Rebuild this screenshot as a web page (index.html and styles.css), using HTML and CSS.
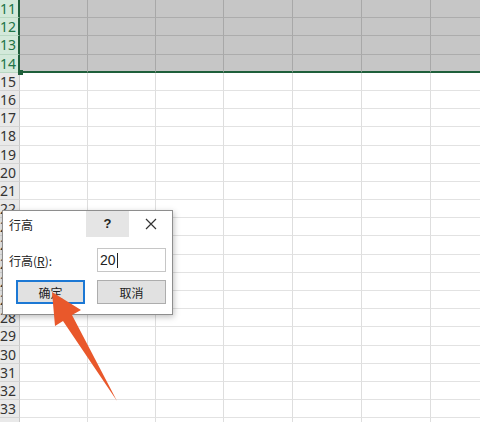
FILE: index.html
```html
<!DOCTYPE html>
<html>
<head>
    <title>行高</title>
    <link rel="stylesheet" href="styles.css">
</head>
<body>
    <div id="sheet" class="sheet"></div>

    <div class="fill-handle"></div>

    <div class="dialog">
        <div class="dlg-title">
            <span class="dlg-caption">行高</span>
            <span class="dlg-help">?</span>
            <span class="dlg-close">
                <svg width="12" height="12" viewBox="0 0 12 12"><path d="M1 1 L11 11 M11 1 L1 11" stroke="#333" stroke-width="1.2" fill="none"/></svg>
            </span>
        </div>
        <div class="dlg-body">
            <div class="dlg-row">
                <span class="dlg-label">行高(<u>R</u>):</span>
                <div class="dlg-input">20<span class="caret"></span></div>
            </div>
            <div class="dlg-buttons">
                <button class="btn btn-default">确定</button>
                <button class="btn">取消</button>
            </div>
        </div>
    </div>

    <svg class="arrow" width="480" height="422" viewBox="0 0 480 422">
        <polygon points="52,292 81,310 72,315 117,401 63,321 55,326" fill="#e9582b"/>
    </svg>

    <script>
        const sheet = document.getElementById("sheet");
        const cols = 7;
        for (let r = 11; r <= 34; r++) {
            const selected = r >= 11 && r <= 14;
            const head = document.createElement("div");
            head.className = "row-head" + (selected ? " sel" : "");
            head.textContent = r;
            sheet.appendChild(head);
            for (let c = 0; c < cols; c++) {
                const cell = document.createElement("div");
                cell.className = "cell" + (selected ? " sel" : "") + (r === 14 ? " sel-last" : "");
                sheet.appendChild(cell);
            }
        }
    </script>
</body>
</html>
```

FILE: styles.css
```css
body {
    margin: 0;
    width: 480px;
    height: 422px;
    overflow: hidden;
    background-color: #fff;
    font-family: "Noto Sans", "Noto Sans CJK SC", sans-serif;
    position: relative;
}

.sheet {
    display: grid;
    grid-template-columns: 20px 68px 68px 68px 69px 69px 69px 69px;
    grid-auto-rows: 18.2px;
}

.row-head {
    box-sizing: border-box;
    background-color: #e9e9e9;
    border-right: 1px solid #c8c8c8;
    border-bottom: 1px solid #d4d4d4;
    color: #333;
    font-size: 14px;
    line-height: 18px;
    text-align: right;
    padding-right: 7px;
    overflow: hidden;
    white-space: nowrap;
}

.row-head.sel {
    background-color: #d3e9da;
    color: #217346;
    border-right: 2px solid #1f5f3b;
    border-bottom-color: #b9d8c3;
}

.cell {
    box-sizing: border-box;
    border-right: 1px solid #dedede;
    border-bottom: 1px solid #e2e2e2;
}

.cell.sel {
    background-color: #c6c6c6;
    border-right-color: #a8a8a8;
    border-bottom-color: #acacac;
}

.cell.sel-last {
    border-bottom: 2px solid #1f5f3b;
}

.fill-handle {
    position: absolute;
    left: 18px;
    top: 70px;
    width: 5px;
    height: 5px;
    background-color: #1f5f3b;
}

.dialog {
    position: absolute;
    left: 2px;
    top: 210px;
    width: 171px;
    height: 105px;
    box-sizing: border-box;
    background-color: #fff;
    border: 1px solid #8e8e8e;
    box-shadow: 1px 2px 6px rgba(0, 0, 0, 0.25);
    font-family: "Noto Sans CJK SC", sans-serif;
    color: #222;
}

.dlg-title {
    display: flex;
    height: 26px;
    align-items: stretch;
}

.dlg-caption {
    flex: 1;
    font-size: 12px;
    line-height: 27px;
    padding-left: 6px;
}

.dlg-help {
    width: 43px;
    background-color: #e5e5e5;
    text-align: center;
    font-family: "Liberation Sans", sans-serif;
    font-weight: bold;
    font-size: 13px;
    line-height: 26px;
}

.dlg-close {
    width: 43px;
    display: flex;
    align-items: center;
    justify-content: center;
}

.dlg-body {
    padding-top: 11px;
}

.dlg-row {
    display: flex;
    align-items: center;
    height: 24px;
}

.dlg-label {
    padding-left: 6px;
    font-size: 12px;
}

.dlg-input {
    margin-left: auto;
    margin-right: 6px;
    width: 69px;
    height: 24px;
    box-sizing: border-box;
    border: 1px solid #c6c6c6;
    font-family: "Liberation Sans", sans-serif;
    font-size: 14px;
    line-height: 22px;
    padding-left: 2px;
    display: flex;
    align-items: center;
}

.caret {
    display: inline-block;
    width: 1px;
    height: 15px;
    background-color: #222;
    margin-left: 1px;
}

.dlg-buttons {
    display: flex;
    gap: 12px;
    padding-left: 13px;
    margin-top: 8px;
}

.btn {
    width: 69px;
    height: 24px;
    box-sizing: border-box;
    background-color: #e1e1e1;
    border: 1px solid #adadad;
    font-family: "Noto Sans CJK SC", sans-serif;
    font-size: 12px;
    color: #222;
    padding: 0;
}

.btn-default {
    border: 2px solid #1c78d4;
}

.arrow {
    position: absolute;
    left: 0;
    top: 0;
}
```
